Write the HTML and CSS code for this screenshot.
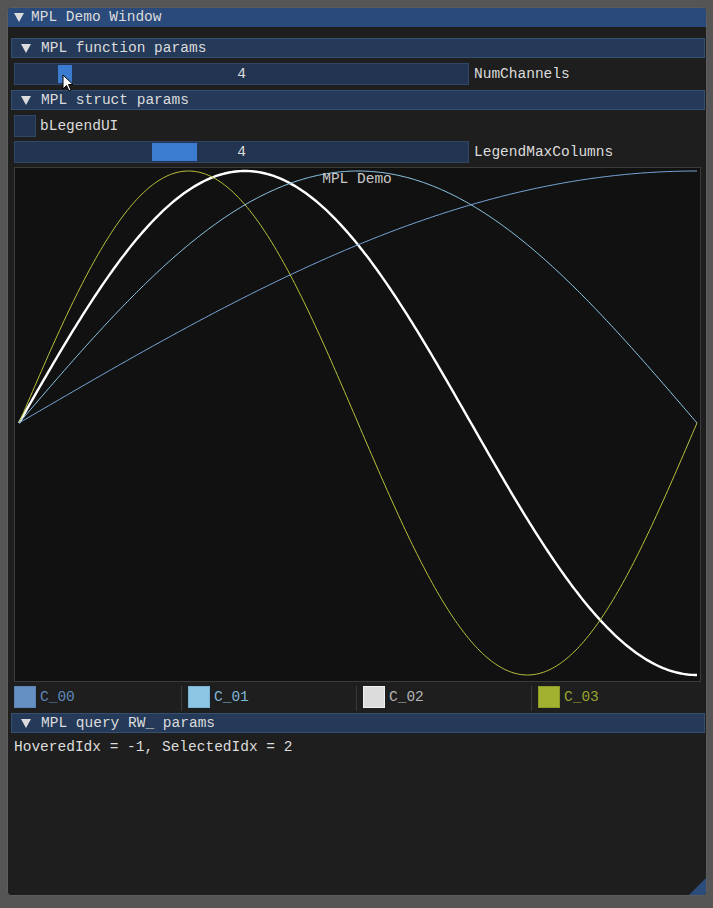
FILE: index.html
```html
<!DOCTYPE html>
<html>
<head>
<meta charset="utf-8">
<link rel="stylesheet" href="styles.css">
</head>
<body>
<div class="window">
  <div class="titlebar"><span class="tri"></span><span>MPL Demo Window</span></div>
  <div class="content">
    <div class="header"><span class="tri"></span><span>MPL function params</span></div>
    <div class="row">
      <div class="slider"><div class="grab" style="left:43px;width:14px"></div><span class="val">4</span></div>
      <span class="label">NumChannels</span>
    </div>
    <div class="header"><span class="tri"></span><span>MPL struct params</span></div>
    <div class="row">
      <div class="checkbox"></div>
      <span class="label cblabel">bLegendUI</span>
    </div>
    <div class="row">
      <div class="slider"><div class="grab" style="left:137px;width:45px"></div><span class="val">4</span></div>
      <span class="label">LegendMaxColumns</span>
    </div>
    <div class="plot">
      <svg id="curves" width="685" height="513" viewBox="0 0 685 513">
        <text x="342" y="15" text-anchor="middle" class="ptitle">MPL Demo</text>
      </svg>
    </div>
    <div class="legend">
      <div class="litem"><span class="sw c0"></span><span class="lt t0">C_00</span></div>
      <div class="litem sep"><span class="sw c1"></span><span class="lt t1">C_01</span></div>
      <div class="litem sep"><span class="sw c2"></span><span class="lt t2">C_02</span></div>
      <div class="litem sep"><span class="sw c3"></span><span class="lt t3">C_03</span></div>
    </div>
    <div class="header"><span class="tri"></span><span>MPL query RW_ params</span></div>
    <div class="text">HoveredIdx = -1, SelectedIdx = 2</div>
  </div>
  <div class="grip"></div>
</div>
<svg class="cursor" width="14" height="20" viewBox="0 0 14 20">
  <path d="M1 1 L1 15 L4.5 11.5 L7 17 L9 16 L6.5 10.5 L11 10.5 Z" fill="#fff" stroke="#000" stroke-width="1" stroke-linejoin="round"/>
</svg>
<script src="script.js"></script>
</body>
</html>
```

FILE: styles.css
```css
* { box-sizing: border-box; }
html, body { margin: 0; padding: 0; }
body {
  background: #555555;
  width: 713px;
  height: 908px;
  padding: 7px 0 0 7px;
  font-family: "Liberation Mono", "DejaVu Sans Mono", monospace;
  font-size: 14.5px;
  color: #dcdcdc;
  position: relative;
  overflow: hidden;
}
.window {
  position: relative;
  width: 700px;
  height: 889px;
  background: #1e1e1e;
  border: 1px solid #5c5c5c;
  border-radius: 4px;
  overflow: hidden;
}
.titlebar {
  height: 20px;
  margin: -1px -1px 0 -1px;
  background: #294a7a;
  display: flex;
  align-items: center;
  padding-left: 7px;
  padding-top: 1px;
  gap: 7px;
  line-height: 19px;
  border-radius: 4px 4px 0 0;
}
.tri {
  width: 0;
  height: 0;
  border-left: 5px solid transparent;
  border-right: 5px solid transparent;
  border-top: 9px solid #dcdcdc;
  flex: none;
}
.content {
  display: flex;
  flex-direction: column;
  gap: 4px;
  padding: 10px 5px 0 6px;
}
.header {
  height: 20px;
  margin: 1px -4px 1px -3px;
  background: #253a59;
  border: 1px solid #35506f;
  display: flex;
  align-items: center;
  padding-left: 9px;
  gap: 10px;
  line-height: 18px;
}
.row {
  display: flex;
  align-items: center;
  height: 22px;
}
.slider {
  position: relative;
  width: 455px;
  height: 22px;
  background: #22344f;
  border: 1px solid #2f4666;
  display: flex;
  align-items: center;
  justify-content: center;
  flex: none;
}
.grab {
  position: absolute;
  top: 1px;
  bottom: 1px;
  background: #3b7bd0;
}
.val { position: relative; line-height: 20px; }
.label { margin-left: 5px; line-height: 20px; }
.checkbox {
  width: 22px;
  height: 22px;
  background: #22344f;
  border: 1px solid #2f4666;
  flex: none;
}
.cblabel { margin-left: 4px; }
.plot {
  height: 515px;
  background: #111111;
  border: 1px solid #3b3b3b;
}
.plot svg { display: block; }
.ptitle {
  font-family: "Liberation Mono", "DejaVu Sans Mono", monospace;
  font-size: 14.5px;
  fill: #c8c8c8;
}
.legend {
  display: grid;
  grid-template-columns: 167px 175px 175px 1fr;
  height: 22px;
}
.litem {
  display: flex;
  align-items: center;
  gap: 4px;
  height: 25px;
}
.litem.sep {
  border-left: 1px solid #3a3a3a;
  padding-left: 6px;
}
.sw {
  width: 22px;
  height: 22px;
  flex: none;
  align-self: flex-start;
}
.c0 { background: #6590c4; border: 1px solid #5a82b4; }
.c1 { background: #8cc6e4; border: 1px solid #7ab4d4; }
.c2 { background: #dcdcdc; border: 1px solid #f0f0f0; }
.c3 { background: #a3b131; border: 1px solid #8c9a28; }
.lt { line-height: 22px; align-self: flex-start; }
.t0 { color: #5f88ba; }
.t1 { color: #7eb6d6; }
.t2 { color: #b4b4b4; }
.t3 { color: #98a530; }
.text { line-height: 18px; height: 18px; }
.grip {
  position: absolute;
  right: 0;
  bottom: 0;
  width: 0;
  height: 0;
  border-left: 17px solid transparent;
  border-bottom: 17px solid #2c4d7c;
}
.cursor {
  position: absolute;
  left: 62px;
  top: 74px;
}
```

FILE: script.js
```js
(function () {
  var svg = document.getElementById('curves');
  var NS = 'http://www.w3.org/2000/svg';
  var colors = ['#79a8dc', '#8ec8e8', '#ffffff', '#b9c23a'];
  var widths = [1, 1, 2.4, 1];
  var order = [0, 1, 3, 2];
  order.forEach(function (k) {
    var d = '';
    var n = 300;
    for (var i = 0; i <= n; i++) {
      var t = i / n;
      var x = 4 + 678 * t;
      var y = 255 - 252 * Math.sin((k + 1) * Math.PI * t / 2);
      d += (i === 0 ? 'M' : 'L') + x.toFixed(2) + ' ' + y.toFixed(2) + ' ';
    }
    var p = document.createElementNS(NS, 'path');
    p.setAttribute('d', d);
    p.setAttribute('fill', 'none');
    p.setAttribute('stroke', colors[k]);
    p.setAttribute('stroke-width', widths[k]);
    p.setAttribute('stroke-linejoin', 'round');
    svg.insertBefore(p, svg.firstChild);
  });
})();
```
